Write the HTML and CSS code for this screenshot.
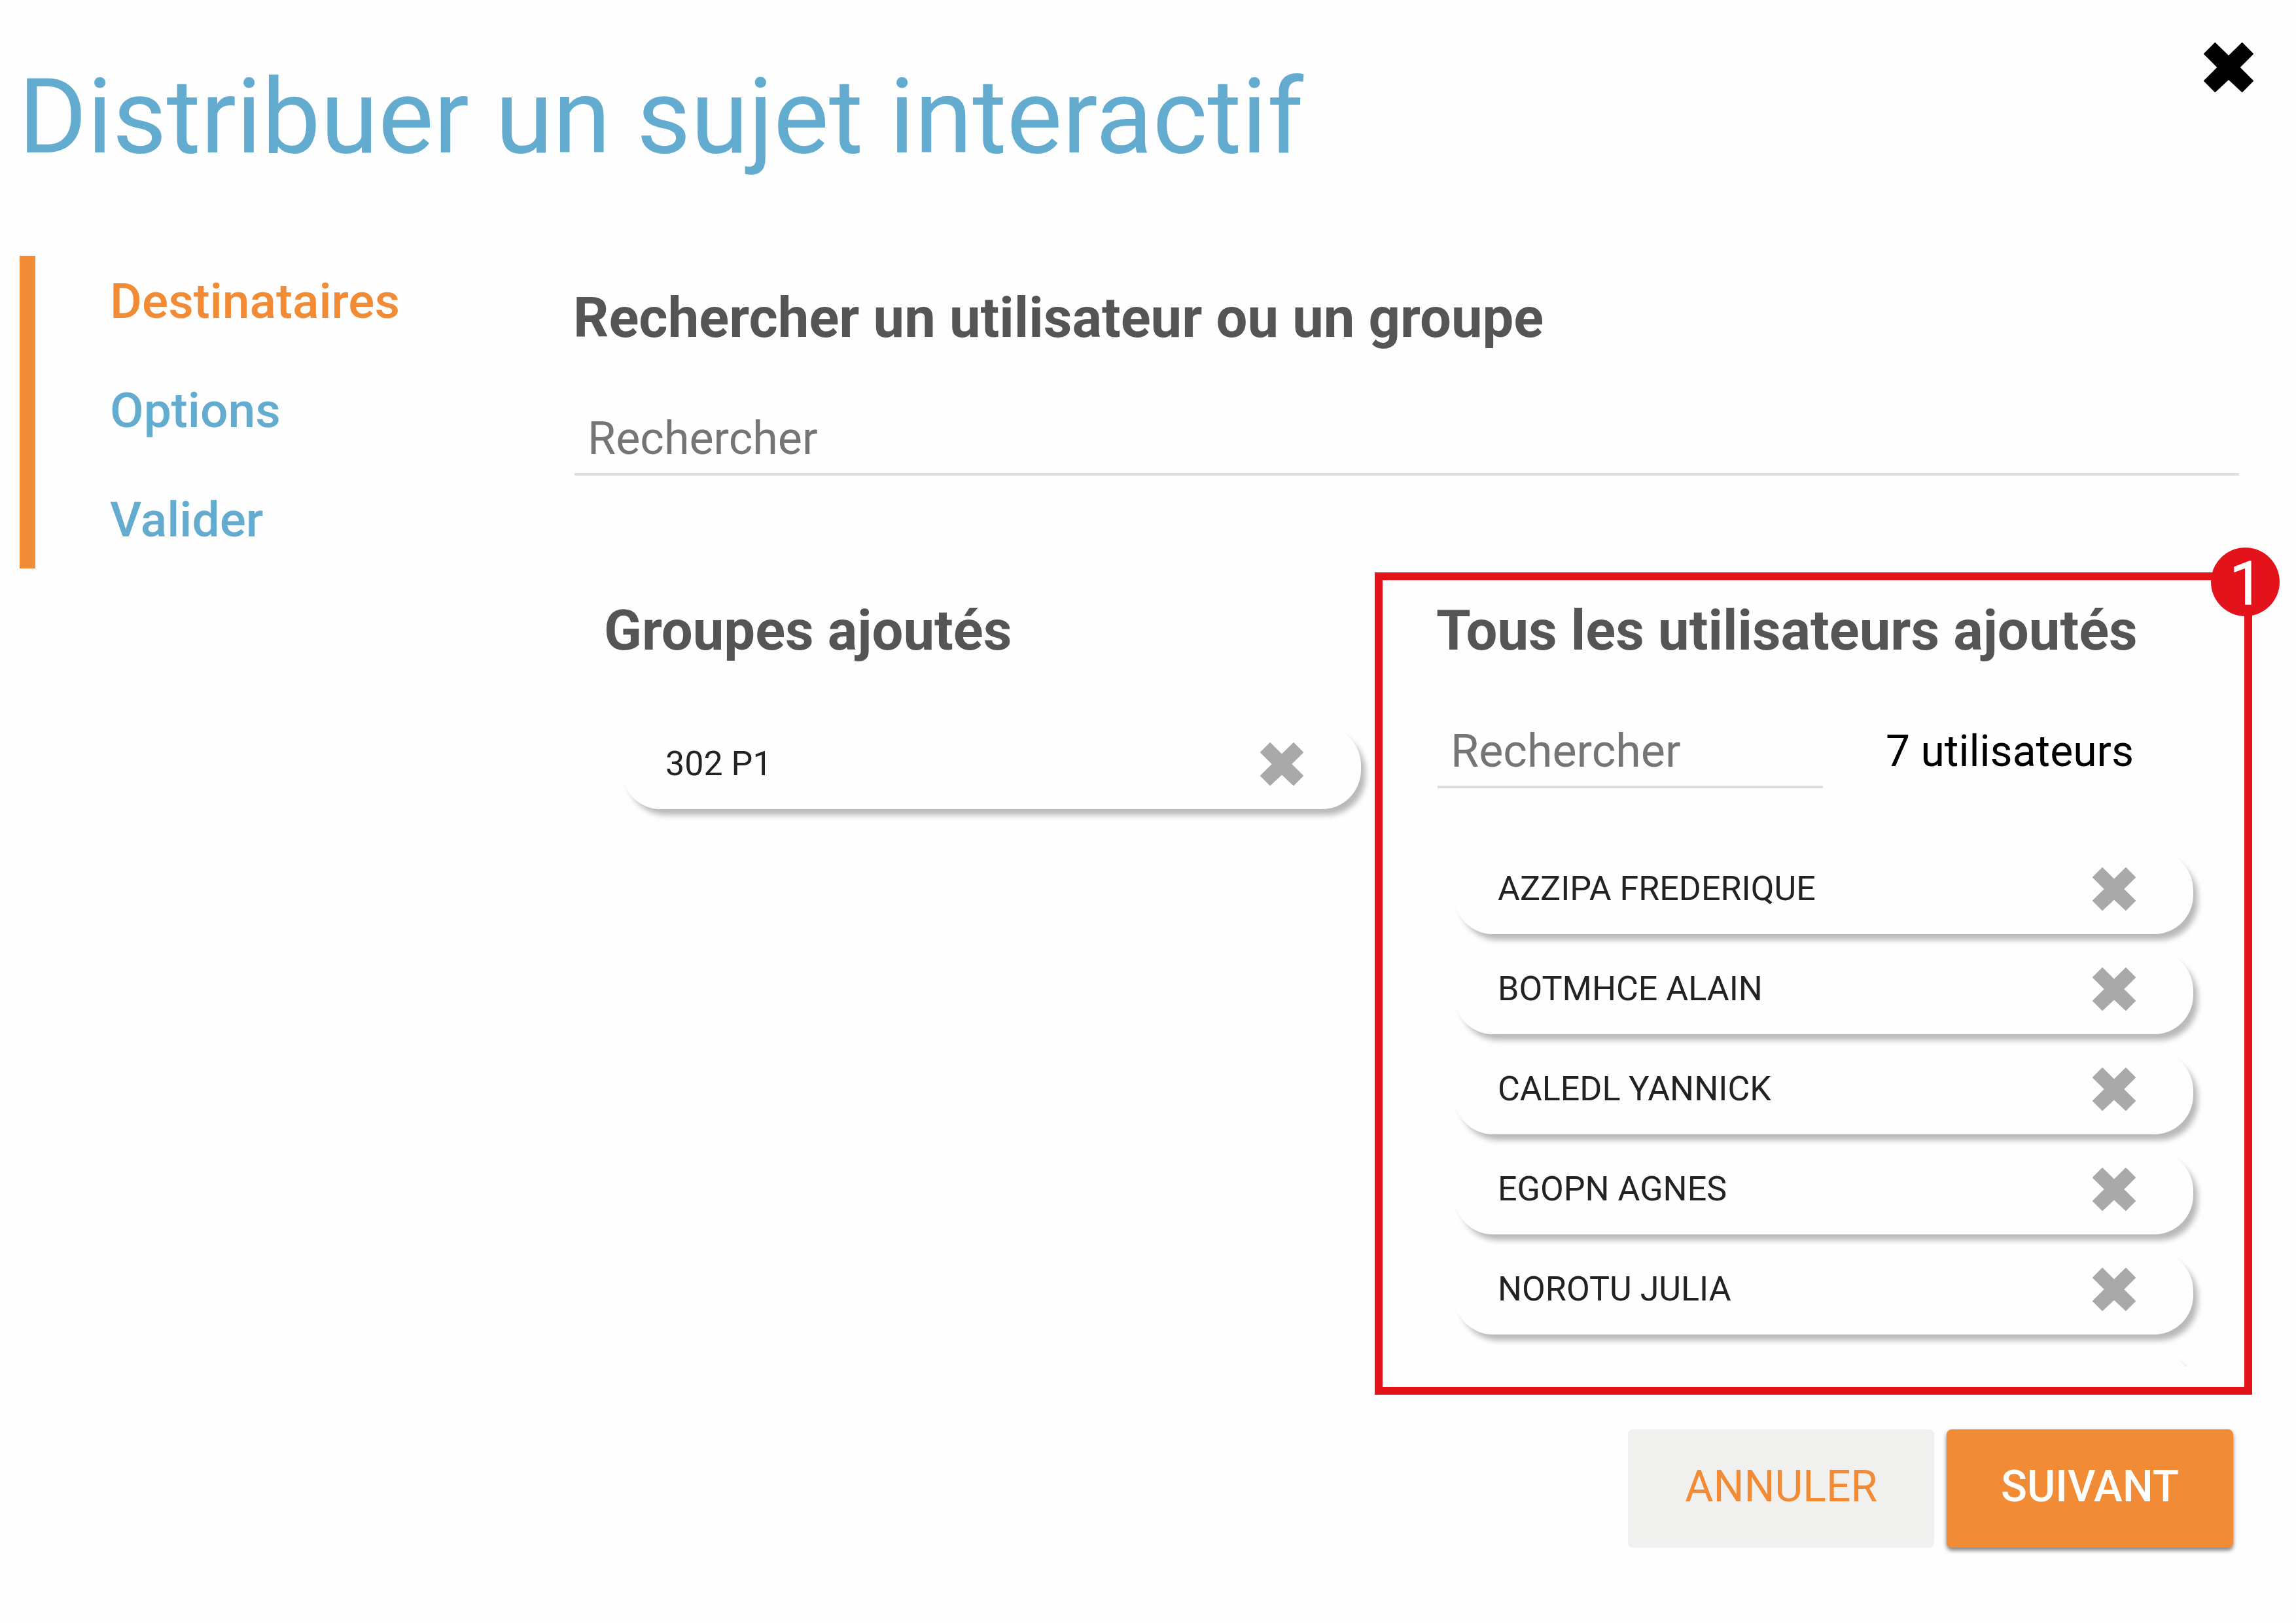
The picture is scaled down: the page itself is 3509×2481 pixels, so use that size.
FILE: index.html
```html
<!DOCTYPE html>
<html lang="fr">
<head>
<meta charset="utf-8">
<title>Distribuer un sujet interactif</title>
<link rel="stylesheet" href="styles.css">
</head>
<body>
<svg class="defs" aria-hidden="true">
  <symbol id="cross" viewBox="0 0 228 228">
    <path d="M52 3 L114 64 L176 3 L225 52 L163 114 L225 176 L176 225 L114 167 L52 225 L3 176 L65 114 L3 52 Z" fill="currentColor" stroke="currentColor" stroke-width="6" stroke-linejoin="round"/>
  </symbol>
</svg>
<header class="header">
  <h1 class="title">Distribuer un sujet interactif</h1>
  <button class="close" type="button" aria-label="Fermer"><svg class="icon"><use href="#cross"/></svg></button>
</header>
<div class="layout">
  <nav class="steps">
    <a class="step step-active" href="#destinataires">Destinataires</a>
    <a class="step" href="#options">Options</a>
    <a class="step" href="#valider">Valider</a>
  </nav>
  <main class="content">
    <h2 class="heading"><label for="search">Rechercher un utilisateur ou un groupe</label></h2>
    <input class="field" id="search" type="text" placeholder="Rechercher">
    <div class="columns">
      <section class="column">
        <h2 class="heading">Groupes ajoutés</h2>
        <ul class="chips">
          <li class="chip"><span>302 P1</span><button class="remove" type="button" aria-label="Retirer"><svg class="icon"><use href="#cross"/></svg></button></li>
        </ul>
      </section>
      <section class="column column-marked">
        <h2 class="heading"><label for="filter">Tous les utilisateurs ajoutés</label></h2>
        <div class="filter">
          <input class="field" id="filter" type="text" placeholder="Rechercher">
          <span class="count">7 utilisateurs</span>
        </div>
        <ul class="chips chips-scroll">
          <li class="chip"><span>AZZIPA FREDERIQUE</span><button class="remove" type="button" aria-label="Retirer"><svg class="icon"><use href="#cross"/></svg></button></li>
          <li class="chip"><span>BOTMHCE ALAIN</span><button class="remove" type="button" aria-label="Retirer"><svg class="icon"><use href="#cross"/></svg></button></li>
          <li class="chip"><span>CALEDL YANNICK</span><button class="remove" type="button" aria-label="Retirer"><svg class="icon"><use href="#cross"/></svg></button></li>
          <li class="chip"><span>EGOPN AGNES</span><button class="remove" type="button" aria-label="Retirer"><svg class="icon"><use href="#cross"/></svg></button></li>
          <li class="chip"><span>NOROTU JULIA</span><button class="remove" type="button" aria-label="Retirer"><svg class="icon"><use href="#cross"/></svg></button></li>
          <li class="chip"></li>
        </ul>
        <svg class="badge" viewBox="0 0 105 105"><circle cx="52.5" cy="52.5" r="52.5"/><text x="54" y="87">1</text></svg>
      </section>
    </div>
  </main>
</div>
<footer class="actions">
  <button class="button button-cancel" type="button">ANNULER</button>
  <button class="button button-next" type="button">SUIVANT</button>
</footer>
</body>
</html>
```
FILE: styles.css
```css
* {
  box-sizing: border-box;
}

body {
  margin: 0;
  background: #fefefe;
  color: #000;
  font-family: Roboto, "Liberation Sans", sans-serif;
  font-size: 70px;
  line-height: 100px;
}

button,
input {
  font: inherit;
}

.defs {
  display: none;
}

.icon {
  display: block;
  width: 100%;
  height: 100%;
}

.header {
  display: flex;
  justify-content: space-between;
  align-items: flex-start;
  padding: 65px 65px 99px 28px;
}

.title {
  margin: 0;
  color: #63acd0;
  font-size: 160px;
  font-weight: 400;
  line-height: 227px;
}

.close {
  width: 76px;
  height: 76px;
  padding: 0;
  border: 0;
  background: none;
  color: #000;
}

.layout {
  display: grid;
  grid-template-columns: 1fr 3fr;
  align-items: start;
  padding: 0 87px 0 30px;
}

.steps {
  display: flex;
  flex-direction: column;
  gap: 67px;
  padding: 19px 0 25px 114px;
  border-left: 24px solid #f18b35;
}

.step {
  color: #63acd0;
  font-size: 75px;
  font-weight: 500;
  text-decoration: none;
}

.step-active {
  color: #f18b35;
}

.content {
  padding-top: 45px;
}

.heading {
  margin: 0 -2px 83px;
  color: #555;
  font-size: 85px;
  font-weight: 700;
  line-height: 100px;
}

.field {
  display: block;
  width: 100%;
  height: 108px;
  padding: 0 20px 2px;
  border: 0;
  border-bottom: 4px solid #ddd;
  background: none;
}

.field::placeholder {
  color: #757575;
  opacity: 1;
}

.columns {
  display: grid;
  grid-template-columns: 1fr 1fr;
  align-items: start;
  margin-top: 187px;
}

.column {
  padding: 0 47px;
}

.filter {
  display: grid;
  grid-template-columns: 1fr 1fr;
  margin-bottom: 96px;
}

.count {
  padding-left: 96px;
  font-size: 66px;
  line-height: 104px;
}

.chips {
  display: flex;
  flex-direction: column;
  gap: 26px;
  margin: 96px 0 0;
  padding: 0 23px 0 25px;
  list-style: none;
}

.chips-scroll {
  height: 788px;
  overflow: hidden;
}

.chip {
  display: flex;
  flex: none;
  justify-content: space-between;
  align-items: center;
  height: 127px;
  padding: 0 88px 12px 67px;
  border-radius: 60px;
  background: #fefefe;
  box-shadow: 8px 10px 8px -1px #b9b9b9;
  color: #222;
  font-size: 52px;
}

.remove {
  width: 66px;
  height: 66px;
  padding: 0;
  border: 0;
  background: none;
  color: #a9a9a9;
}

/* Numbered call-out around the list of users */
.column-marked {
  position: relative;
}

.column-marked::after {
  content: "";
  position: absolute;
  inset: -39px -20px -43px -49px;
  border: 12px solid #e4131b;
  pointer-events: none;
}

.badge {
  position: absolute;
  z-index: 1;
  top: -77px;
  right: -62px;
  width: 105px;
  height: 105px;
  overflow: visible;
  fill: #e4131b;
}

.badge text {
  fill: #fff;
  stroke: #fff;
  stroke-width: 1px;
  stroke-linejoin: round;
  font-size: 92px;
  text-anchor: middle;
}

.actions {
  display: flex;
  justify-content: flex-end;
  gap: 19px;
  padding: 96px 96px 116px;
}

.button {
  padding: 48px 87px 53px;
  border: 0;
  border-radius: 8px;
  font-size: 66px;
  line-height: 80px;
}

.button-cancel {
  background: #f0f0ee;
  color: #f18b35;
}

.button-next {
  padding-right: 83px;
  padding-left: 83px;
  background: #f18b35;
  box-shadow: 0 4px 6px rgba(0, 0, 0, 0.5);
  color: #fff;
  font-weight: 500;
}
```
